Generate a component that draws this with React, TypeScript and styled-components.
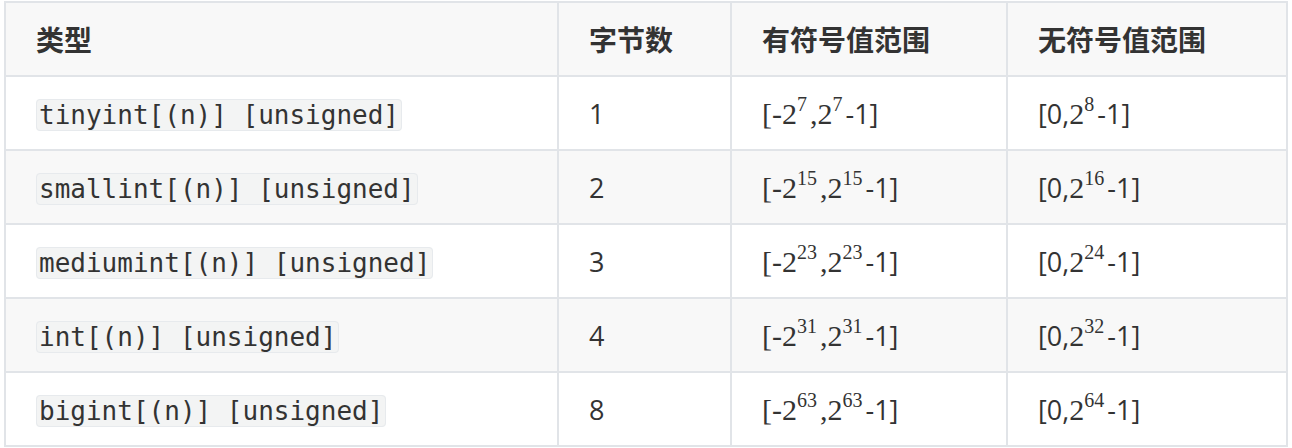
import styled, { createGlobalStyle } from "styled-components";

const GlobalStyle = createGlobalStyle`
  html, body {
    margin: 0;
    padding: 0;
    background: #ffffff;
  }
  body {
    font-family: "Open Sans", "Noto Sans CJK SC", sans-serif;
    color: #333333;
  }
`;

const rows = [
  { type: "tinyint[(n)] [unsigned]", bytes: "1", s: "7", u: "8" },
  { type: "smallint[(n)] [unsigned]", bytes: "2", s: "15", u: "16" },
  { type: "mediumint[(n)] [unsigned]", bytes: "3", s: "23", u: "24" },
  { type: "int[(n)] [unsigned]", bytes: "4", s: "31", u: "32" },
  { type: "bigint[(n)] [unsigned]", bytes: "8", s: "63", u: "64" },
];

function App() {
  return (
    <>
      <GlobalStyle />
      <Page>
        <Table>
          <colgroup>
            <col style={{ width: 553 }} />
            <col style={{ width: 173 }} />
            <col style={{ width: 276 }} />
            <col style={{ width: 280 }} />
          </colgroup>
          <thead>
            <Row $shaded>
              <Head>类型</Head>
              <Head>字节数</Head>
              <Head>有符号值范围</Head>
              <Head>无符号值范围</Head>
            </Row>
          </thead>
          <tbody>
            {rows.map((r, i) => (
              <Row key={r.type} $shaded={i % 2 === 1}>
                <Cell>
                  <Code>{r.type}</Code>
                </Cell>
                <Cell>{r.bytes}</Cell>
                <Cell>
                  <Math>[-2</Math>
                  <Math>
                    <Sup>{r.s}</Sup>,2<Sup>{r.s}</Sup>
                  </Math>
                  -1]
                </Cell>
                <Cell>
                  [0,<Math>2</Math>
                  <Math>
                    <Sup>{r.u}</Sup>
                  </Math>
                  -1]
                </Cell>
              </Row>
            ))}
          </tbody>
        </Table>
      </Page>
    </>
  );
}

const Page = styled.div`
  padding: 1px 5px 0 4px;
`;

const Table = styled.table`
  width: 1284px;
  border-collapse: collapse;
  table-layout: fixed;
`;

const Row = styled.tr<{ $shaded?: boolean }>`
  background: ${(p) => (p.$shaded ? "#f8f8f8" : "#ffffff")};
`;

const Head = styled.th`
  height: 72px;
  padding: 0 30px;
  border: 2px solid #e1e4e8;
  text-align: left;
  font-size: 28px;
  font-weight: 700;
  color: #333333;
  font-family: "Noto Sans CJK SC", "Open Sans", sans-serif;
`;

const Cell = styled.td`
  height: 72px;
  padding: 0 30px;
  border: 2px solid #e1e4e8;
  font-size: 27px;
  color: #333333;
  white-space: nowrap;
`;

const Code = styled.code`
  font-family: "DejaVu Sans Mono", monospace;
  font-size: 26px;
  background: #f3f4f4;
  border: 1px solid #e7eaed;
  border-radius: 4px;
  padding: 0 2px;
  color: #333333;
`;

const Math = styled.span`
  font-family: "Liberation Serif", serif;
  font-size: 30px;
`;

const Sup = styled.sup`
  font-size: 20px;
  vertical-align: 0;
  position: relative;
  top: -13px;
  margin-right: 3px;
`;

export default App;
